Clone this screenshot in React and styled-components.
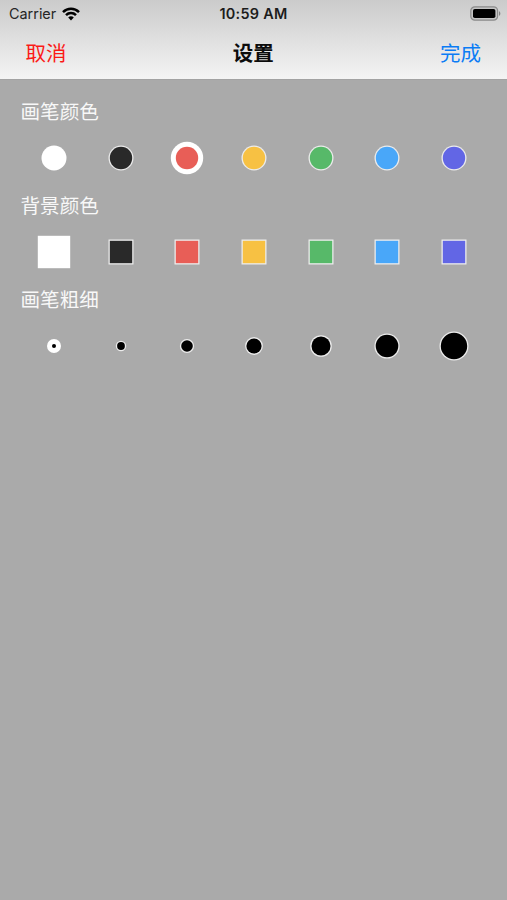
import React, { useState } from "react";
import styled, { createGlobalStyle } from "styled-components";

const GlobalStyle = createGlobalStyle`
  * {
    box-sizing: border-box;
  }

  body {
    margin: 0;
    background: #aaaaaa;
    font-family: Inter, "Liberation Sans", "Noto Sans CJK SC", sans-serif;
  }
`;

const Screen = styled.div`
  display: flex;
  flex-direction: column;
  height: 900px;
  overflow: hidden;
  background: #aaaaaa;
`;

const Header = styled.header`
  height: 80px;
  background: linear-gradient(#cbcbcb, #f4f4f4);
  border-bottom: 1px solid #a2a2a2;
`;

const StatusBar = styled.div`
  display: grid;
  grid-template-columns: 1fr auto 1fr;
  align-items: center;
  height: 27px;
  padding: 0 6px;
`;

const Carrier = styled.div`
  display: flex;
  align-items: center;
  gap: 6px;
  padding-left: 3px;
  font-size: 14.4px;
  color: #262626;
`;

const Clock = styled.div`
  font-size: 14.4px;
  font-weight: 600;
  letter-spacing: 0.3px;
  color: #1c1c1c;
`;

const BatteryHolder = styled.div`
  display: flex;
  justify-content: flex-end;
`;

const NavBar = styled.nav`
  display: flex;
  align-items: center;
  justify-content: space-between;
  height: 49px;
  padding: 0 26px 0 25.5px;
`;

const NavButton = styled.button`
  padding: 0;
  border: none;
  background: none;
  font-family: "Noto Sans CJK SC", sans-serif;
  font-size: 20.5px;
  line-height: 30px;
  color: ${(props) => props.$color};
  cursor: pointer;
`;

const Title = styled.h1`
  margin: 0;
  font-family: "Noto Sans CJK SC", sans-serif;
  font-size: 20.5px;
  font-weight: 600;
  line-height: 30px;
  color: #0c0c0c;
`;

const Content = styled.main`
  padding: 16px 19.5px 0 20.5px;
`;

const Section = styled.section`
  height: 94.2px;
`;

const Label = styled.h2`
  margin: 0;
  font-family: "Noto Sans CJK SC", sans-serif;
  font-size: 19.6px;
  font-weight: 400;
  line-height: 29px;
  color: #f8f8f8;
`;

const Options = styled.div`
  display: grid;
  grid-template-columns: repeat(7, 1fr);
  height: 66px;
`;

const Option = styled.div`
  display: flex;
  align-items: center;
  justify-content: center;
  cursor: pointer;
`;

const colors = ["#ffffff", "#292929", "#e85e57", "#f7c143", "#57b969", "#49a7f9", "#6266e5"];
const widths = [4, 7.8, 11.6, 15.2, 19, 22.6, 26.4];

// A colour or brush sample with its outline, thicker when selected
const Swatch = ({ color, size, square, selected }) => {
  const ring = selected ? 5 : 1.3;
  const ringColor = selected || color === "#ffffff" ? "#ffffff" : "#ececec";
  const outer = size + ring * 2;

  return (
    <svg width="34" height="34" viewBox="-17 -17 34 34">
      {square ? (
        <>
          <rect x={-outer / 2} y={-outer / 2} width={outer} height={outer} fill={ringColor} />
          <rect x={-size / 2} y={-size / 2} width={size} height={size} fill={color} />
        </>
      ) : (
        <>
          <circle r={outer / 2} fill={ringColor} />
          <circle r={size / 2} fill={color} />
        </>
      )}
    </svg>
  );
};

const WifiIcon = () => (
  <svg width="18" height="14" viewBox="0 0 18 14" fill="none" stroke="#000000" strokeWidth="2.5">
    <path d="M1 5.1C5.5 0.7 12.5 0.7 17 5.1" />
    <path d="M4 8.2C6.8 5.4 11.2 5.4 14 8.2" />
    <path d="M6.2 10.5C7.8 8.9 10.2 8.9 11.8 10.5L9 13.4Z" fill="#000000" stroke="none" />
  </svg>
);

const BatteryIcon = () => (
  <svg width="31" height="15" viewBox="0 0 31 15">
    <rect x="0.8" y="0.8" width="26.8" height="13.4" rx="4" fill="#c4c4c4" stroke="#8b8b8b" strokeWidth="1.2" />
    <rect x="3" y="3" width="22.4" height="9" rx="1.8" fill="#000000" />
    <path d="M29 5.2C30.8 5.9 30.8 9.1 29 9.8Z" fill="#858585" />
  </svg>
);

const App = () => {
  const [penColor, setPenColor] = useState(2);
  const [background, setBackground] = useState(0);
  const [penWidth, setPenWidth] = useState(0);

  return (
    <Screen>
      <GlobalStyle />
      <Header>
        <StatusBar>
          <Carrier>
            Carrier
            <WifiIcon />
          </Carrier>
          <Clock>10:59 AM</Clock>
          <BatteryHolder>
            <BatteryIcon />
          </BatteryHolder>
        </StatusBar>
        <NavBar>
          <NavButton $color="#fb1a17">取消</NavButton>
          <Title>设置</Title>
          <NavButton $color="#0b7cf5">完成</NavButton>
        </NavBar>
      </Header>
      <Content>
        <Section>
          <Label>画笔颜色</Label>
          <Options>
            {colors.map((color, index) => (
              <Option key={color} onClick={() => setPenColor(index)}>
                <Swatch color={color} size={22.4} selected={penColor === index} />
              </Option>
            ))}
          </Options>
        </Section>
        <Section>
          <Label>背景颜色</Label>
          <Options>
            {colors.map((color, index) => (
              <Option key={color} onClick={() => setBackground(index)}>
                <Swatch square color={color} size={22.4} selected={background === index} />
              </Option>
            ))}
          </Options>
        </Section>
        <Section>
          <Label>画笔粗细</Label>
          <Options>
            {widths.map((width, index) => (
              <Option key={width} onClick={() => setPenWidth(index)}>
                <Swatch color="#000000" size={width} selected={penWidth === index} />
              </Option>
            ))}
          </Options>
        </Section>
      </Content>
    </Screen>
  );
};

export default App;
